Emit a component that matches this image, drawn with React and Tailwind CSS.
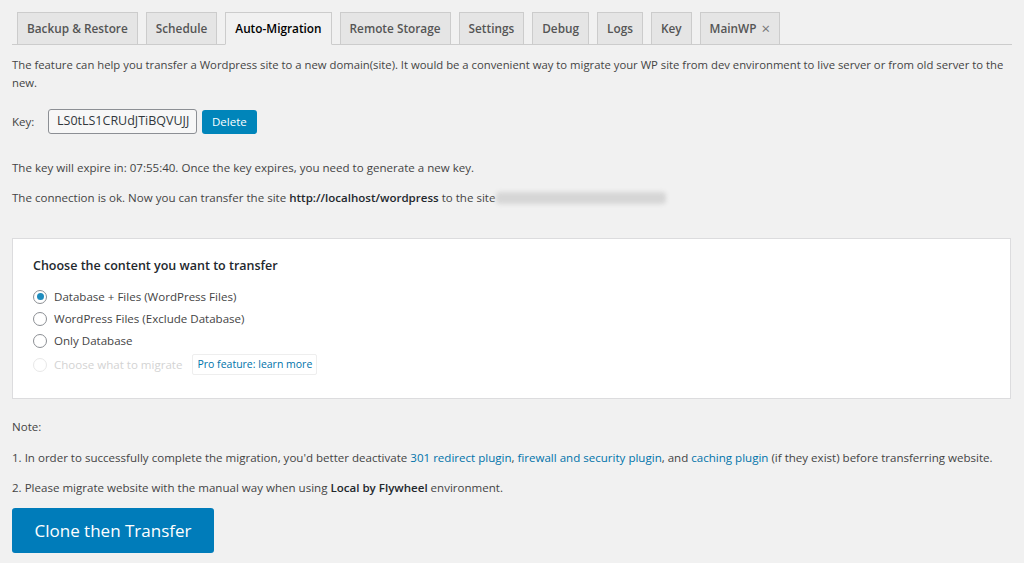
import React from "react";

const tabs = ["Backup & Restore", "Schedule", "Auto-Migration", "Remote Storage", "Settings", "Debug", "Logs", "Key", "MainWP"];

const Radio = ({ checked, disabled }) => (
  <span
    className={`flex h-[14px] w-[14px] shrink-0 items-center justify-center rounded-full border bg-white ${
      disabled ? "border-[#e8e8e8]" : "border-[#8c8f94]"
    }`}
  >
    {checked && <span className="h-[7px] w-[7px] rounded-full bg-[#1e8cbe]" />}
  </span>
);

export default function App() {
  return (
    <div className="min-h-[563px] w-full bg-[#f1f1f1] px-3 pt-3 text-[11.55px] text-[#444] [font-family:'Open_Sans',sans-serif]">
      {/* tabs */}
      <div className="flex gap-2 border-b border-[#ccc] pl-[5px]">
        {tabs.map((t) => {
          const active = t === "Auto-Migration";
          return (
            <div
              key={t}
              className={`-mb-px flex h-[33px] items-center gap-[5px] border border-[#ccc] px-[9px] text-[11.8px] font-semibold ${
                active ? "border-b-[#f1f1f1] bg-[#f1f1f1] text-black" : "bg-[#e5e5e5] text-[#555]"
              }`}
            >
              {t}
              {t === "MainWP" && <span className="text-[15px] font-normal leading-none text-[#777]">×</span>}
            </div>
          );
        })}
      </div>

      <p className="mt-[11px] text-[11.3px] leading-[18px]">
        The feature can help you transfer a Wordpress site to a new domain(site). It would be a convenient way to migrate your WP site from dev environment to live server or from old server to the new.
      </p>

      <div className="mt-[17px] flex items-center">
        <span className="w-[36px]">Key:</span>
        <div className="flex h-[25px] w-[149px] items-center overflow-hidden rounded-[3px] border border-[#8c8f94] bg-[#f7f7f7] px-[8px] text-[12.5px] whitespace-nowrap text-[#32373c]">
          LS0tLS1CRUdJTiBQVUJJ
        </div>
        <button className="ml-[5px] h-[24px] rounded-[3px] bg-[#0085ba] px-[10px] text-[11.5px] text-white">Delete</button>
      </div>

      <p className="mt-[25px] leading-[18px]">The key will expire in: 07:55:40. Once the key expires, you need to generate a new key.</p>
      <p className="mt-[12px] flex items-center leading-[18px]">
        The connection is ok. Now you can transfer the site&nbsp;<b className="font-semibold text-[#23282d]">http://localhost/wordpress</b>&nbsp;to the site
        <span className="ml-[1px] h-[12px] w-[170px] rounded bg-[#d6d6d6] blur-[2px]" />
      </p>

      <div className="mt-[31px] mr-[1px] border border-[#dcdcde] bg-white px-[20px] pt-[18px] pb-[22px]">
        <p className="text-[12.5px] font-semibold text-[#23282d]">Choose the content you want to transfer</p>
        <div className="mt-[12px] flex flex-col gap-[4px]">
          {[
            ["Database + Files (WordPress Files)", true],
            ["WordPress Files (Exclude Database)", false],
            ["Only Database", false],
          ].map(([label, checked]) => (
            <label key={label} className="flex h-[18px] items-center gap-[7px]">
              <Radio checked={checked} />
              {label}
            </label>
          ))}
          <label className="flex h-[22px] items-center gap-[7px] text-[#d3d3d3]">
            <Radio disabled />
            Choose what to migrate
            <span className="ml-[3px] flex h-[21px] items-center rounded-[2px] border border-[#eee] px-[4px] text-[10.5px] text-[#0073aa]">Pro feature: learn more</span>
          </label>
        </div>
      </div>

      <p className="mt-[19px] leading-[18px]">Note:</p>
      <p className="mt-[13px] leading-[18px]">
        1. In order to successfully complete the migration, you'd better deactivate <span className="text-[#0073aa]">301 redirect plugin</span>,{" "}
        <span className="text-[#0073aa]">firewall and security plugin</span>, and <span className="text-[#0073aa]">caching plugin</span> (if they exist) before transferring website.
      </p>
      <p className="mt-[12px] leading-[18px]">
        2. Please migrate website with the manual way when using <b className="font-semibold text-[#23282d]">Local by Flywheel</b> environment.
      </p>
      <button className="mt-[11px] h-[45px] w-[202px] rounded-[3px] bg-[#007cba] text-[17px] text-white">Clone then Transfer</button>
    </div>
  );
}
